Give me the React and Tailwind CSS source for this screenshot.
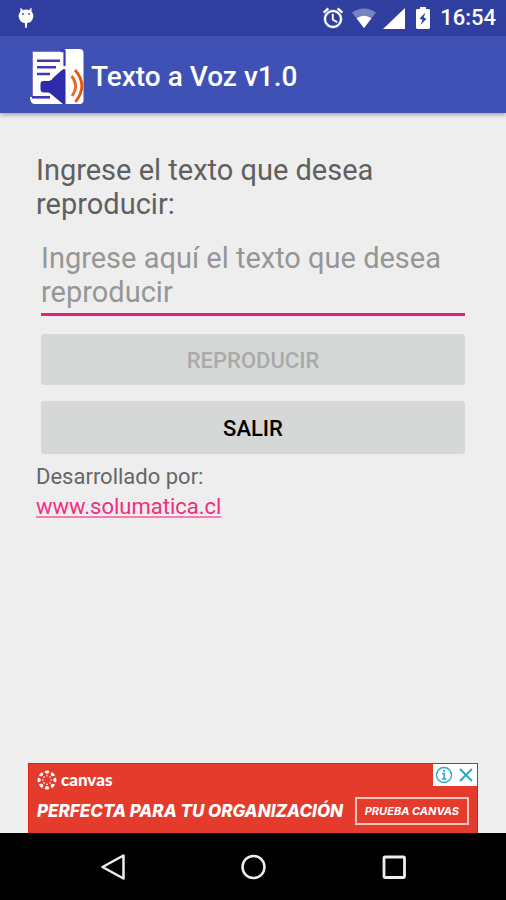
import React, { useState } from 'react';

function DebugIcon() {
  return (
    <svg viewBox="0 0 18 24" className="h-6 w-[18px]" fill="#fff">
      <path d="M3.500 1.500 L6 4 Q9 3.200 12 4 L14.500 1.500 L14.600 5.600 Q16.600 8 16.400 10.500 Q15.400 16.500 10.200 17 L9.800 21.500 Q9 22.600 8.200 21.500 L7.800 17 Q2.600 16.500 1.600 10.500 Q1.400 8 3.400 5.600 Z" />
      <circle cx="6" cy="8" r="0.9" fill="#303f9f" />
      <circle cx="12" cy="8" r="0.9" fill="#303f9f" />
    </svg>
  );
}

function AlarmIcon() {
  return (
    <svg viewBox="0 0 24 24" className="h-6 w-6" fill="#fff" stroke="#fff" strokeWidth="0.4">
      <path d="M22 5.72l-4.6-3.86-1.29 1.53 4.6 3.86L22 5.72zM7.88 3.39L6.6 1.86 2 5.71l1.29 1.53 4.59-3.85zM12.5 8H11v6l4.75 2.85.75-1.23-4-2.37V8zM12 4c-4.97 0-9 4.03-9 9s4.02 9 9 9c4.97 0 9-4.03 9-9s-4.03-9-9-9zm0 16c-3.87 0-7-3.13-7-7s3.13-7 7-7 7 3.13 7 7-3.13 7-7 7z" />
    </svg>
  );
}

function WifiIcon() {
  return (
    <svg viewBox="0 0 24 20" className="h-5 w-6" fill="#fff">
      <path d="M12 20 L0 4.5 Q12 -3.5 24 4.5 Z" opacity="0.35" />
      <path d="M12 20 L4.5 10.3 Q12 5 19.5 10.3 Z" />
    </svg>
  );
}

function SignalIcon() {
  return (
    <svg viewBox="0 0 22 21" className="h-[21px] w-[22px]" fill="#fff">
      <path d="M0 21 L22 0 V21 Z" />
    </svg>
  );
}

function BatteryIcon() {
  return (
    <svg viewBox="0 0 14 22" className="h-[22px] w-3.5">
      <path d="M4 0h6v2h2.6Q14 2 14 3.4V20.6Q14 22 12.6 22H1.4Q0 22 0 20.6V3.4Q0 2 1.4 2H4z" fill="#fff" />
      <path d="M9.500 5.500 L3.500 11.500 L6.600 12.800 L4.500 18 L10.500 11.800 L7.600 10.500 Z" fill="#303f9f" />
    </svg>
  );
}

function AppLogo() {
  return (
    <svg viewBox="0 1 56 56" className="h-14 w-14">
      <rect x="34" y="1" width="20.500" height="55" rx="4" fill="#fff" />
      <path d="M4 4 H33 L37 8 V56 H5 Q1 55 1 49 H4 Z" fill="#fff" />
      <path d="M3.500 49 V3.500 H33" fill="none" stroke="#7d6fd0" strokeWidth="1" />
      <path d="M32 3.500 Q34 1.500 35.500 3 V18" fill="none" stroke="#3a35b8" strokeWidth="2.200" />
      <path d="M8 12.800h23M8 19.300h19M8 26h13" stroke="#4238b5" strokeWidth="2.600" />
      <path d="M3 49.300h18" stroke="#4238b5" strokeWidth="2.600" />
      <path d="M11.500 36 Q11.500 33 14.500 33 H20 Q23 32 25 29 L33 22 Q36.500 19.500 36.500 23 V56 H34 L22 46 Q21 44.500 19 44.500 H15 Q11.500 44.500 11.500 41 Z" fill="#2d2bab" />
      <path d="M42.500 28 Q50.500 37.500 43 48" fill="none" stroke="#ea6a20" strokeWidth="2.800" />
      <path d="M46 22 Q59.500 37 46.500 54" fill="none" stroke="#e8560c" strokeWidth="2.800" />
    </svg>
  );
}

function CanvasLogo() {
  const angles = [0, 45, 90, 135, 180, 225, 270, 315];
  return (
    <svg viewBox="0 0 20 20" className="h-5 w-5" fill="#fff">
      {angles.map((a) => (
        <g key={a} transform={`rotate(${a} 10 10)`}>
          <path d="M7.600 1 Q10 0.100 12.400 1 Q12.200 3.700 10 3.900 Q7.800 3.700 7.600 1 Z" />
          <circle cx="10" cy="5.800" r="0.800" />
        </g>
      ))}
    </svg>
  );
}

function StatusBar() {
  return (
    <div className="flex h-9 items-center justify-between bg-[#303f9f] pr-2.5 pl-[17px]">
      <DebugIcon />
      <div className="flex items-center gap-[7px]">
        <AlarmIcon />
        <WifiIcon />
        <SignalIcon />
        <div className="flex items-center gap-2.5 pl-1">
          <BatteryIcon />
          <span className="text-[22px] leading-9 font-medium text-white">16:54</span>
        </div>
      </div>
    </div>
  );
}

function AdBanner() {
  return (
    <aside className="relative mx-7 flex flex-col gap-[7px] border border-b-0 border-[#dc1f14] bg-[#e43b2c] pt-1.5 pl-2 font-[Inter,sans-serif] text-white">
      <div className="flex items-center gap-1">
        <CanvasLogo />
        <span className="font-[Lato,sans-serif] text-[17px] leading-4 font-black">canvas</span>
      </div>
      <div className="flex items-center justify-between pr-2 pb-2">
        <p className="text-[17px] leading-7 font-extrabold whitespace-nowrap italic">PERFECTA PARA TU ORGANIZACIÓN</p>
        <a href="#canvas" className="border-2 border-[#f9c5bd] px-2 text-[11px] leading-6 font-bold whitespace-nowrap italic">
          PRUEBA CANVAS
        </a>
      </div>
      <div className="absolute top-0 right-0 flex h-[22px] items-center gap-1 bg-white px-0.5">
        <button aria-label="Info">
          <svg viewBox="0 0 18 18" className="h-[18px] w-[18px]" fill="none" stroke="#2aa9c4">
            <circle cx="9" cy="9" r="7.500" strokeWidth="1.400" />
            <path d="M7 7.500h2.200V13M6.800 13h4.600" strokeWidth="1.600" />
            <circle cx="9" cy="4.800" r="0.700" fill="#2aa9c4" />
          </svg>
        </button>
        <button aria-label="Cerrar">
          <svg viewBox="0 0 18 18" className="h-[18px] w-[18px]" stroke="#2aa9c4" strokeWidth="2">
            <path d="M3 3 L15 15 M15 3 L3 15" />
          </svg>
        </button>
      </div>
    </aside>
  );
}

function NavBar() {
  return (
    <nav className="flex h-[67px] items-center justify-between bg-black px-[99px]">
      <button aria-label="Atrás">
        <svg viewBox="0 0 28 28" className="h-7 w-7" fill="none" stroke="#eee" strokeWidth="2.500" strokeLinejoin="round">
          <path d="M3.500 14 L24.500 2.500 V25.500 Z" />
        </svg>
      </button>
      <button aria-label="Inicio">
        <svg viewBox="0 0 28 28" className="h-7 w-7" fill="none" stroke="#eee" strokeWidth="2.500">
          <circle cx="14.500" cy="14" r="11" />
        </svg>
      </button>
      <button aria-label="Recientes">
        <svg viewBox="0 0 28 28" className="h-7 w-7" fill="none" stroke="#eee" strokeWidth="2.800">
          <rect x="5" y="4" width="20.500" height="20.500" rx="1" />
        </svg>
      </button>
    </nav>
  );
}

export default function App() {
  const [text, setText] = useState('');

  return (
    <div className="flex min-h-screen flex-col bg-[#eee] font-[Roboto,sans-serif]">
      <StatusBar />
      <header className="flex h-[77px] items-center gap-1.5 bg-[#3f51b5] pt-1 pl-[29px] shadow-[0_2px_4px_rgba(0,0,0,0.3)]">
        <AppLogo />
        <h1 className="text-[28px] leading-9 font-medium text-white">Texto a Voz v1.0</h1>
      </header>

      <main className="flex flex-1 flex-col px-9 pt-10">
        <label htmlFor="texto" className="text-[29px] leading-[34px] text-[#606060]">
          Ingrese el texto que desea reproducir:
        </label>
        <div className="flex flex-col px-[5px] pt-5">
          <textarea
            id="texto"
            rows={2}
            value={text}
            onChange={(e) => setText(e.target.value)}
            placeholder="Ingrese aquí el texto que desea reproducir"
            className="resize-none overflow-hidden border-b-[3px] border-[#ec1e79] pb-1 text-[29px] leading-[34px] text-[#212121] outline-none placeholder:text-[#969696]"
          />
          <div className="flex flex-col gap-4 pt-[18px]">
            <button
              disabled={!text.trim()}
              className="h-[51px] rounded-[3px] bg-[#d6d8d7] pt-0.5 text-[22px] font-medium text-black disabled:text-[#a9abaa]"
            >
              REPRODUCIR
            </button>
            <button className="h-[53px] rounded-[3px] bg-[#d6d8d7] pt-0.5 text-[22px] font-medium text-black">
              SALIR
            </button>
          </div>
        </div>
        <p className="pt-2 text-[22px] leading-[30px] text-[#666]">
          Desarrollado por:
          <br />
          <a href="http://www.solumatica.cl" className="text-[#f02f80] underline decoration-[#f57eae] decoration-2 underline-offset-2">
            www.solumatica.cl
          </a>
        </p>
      </main>

      <AdBanner />
      <NavBar />
    </div>
  );
}
